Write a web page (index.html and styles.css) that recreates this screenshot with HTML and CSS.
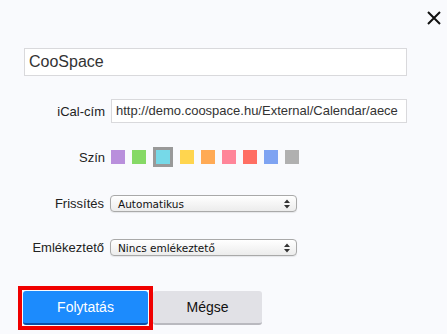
FILE: index.html
```html
<!DOCTYPE html>
<html lang="hu">
<head>
  <meta charset="UTF-8">
  <title>Naptár hozzáadása</title>
  <link rel="stylesheet" href="styles.css">
</head>
<body>

<div class="dialog">
  <div class="topbar">
    <button class="close-button" aria-label="Bezárás">
      <svg width="14" height="14" viewBox="0 0 14 14">
        <path d="M1 1 L13 13 M13 1 L1 13" stroke="#111" stroke-width="2" fill="none"/>
      </svg>
    </button>
  </div>

  <div class="title-field">CooSpace</div>

  <div class="form-row row-ical">
    <label class="form-label">iCal-cím</label>
    <div class="url-field">http://demo.coospace.hu/External/Calendar/aece</div>
  </div>

  <div class="form-row row-color">
    <label class="form-label">Szín</label>
    <div class="swatches">
      <span class="swatch" style="background:#b98fdc"></span>
      <span class="swatch" style="background:#86d966"></span>
      <span class="swatch selected" style="background:#76d9e8"></span>
      <span class="swatch" style="background:#ffd54f"></span>
      <span class="swatch" style="background:#ffaa55"></span>
      <span class="swatch" style="background:#ff8599"></span>
      <span class="swatch" style="background:#ff6e63"></span>
      <span class="swatch" style="background:#7ea3f2"></span>
      <span class="swatch" style="background:#b0b0b0"></span>
    </div>
  </div>

  <div class="form-row row-refresh">
    <label class="form-label">Frissítés</label>
    <div class="select-box">
      <span class="select-text">Automatikus</span>
      <svg class="select-arrows" width="6" height="10" viewBox="0 0 6 10">
        <path d="M0 4 L3 0.5 L6 4 Z M0 6 L3 9.5 L6 6 Z" fill="#333"/>
      </svg>
    </div>
  </div>

  <div class="form-row row-reminder">
    <label class="form-label">Emlékeztető</label>
    <div class="select-box">
      <span class="select-text">Nincs emlékeztető</span>
      <svg class="select-arrows" width="6" height="10" viewBox="0 0 6 10">
        <path d="M0 4 L3 0.5 L6 4 Z M0 6 L3 9.5 L6 6 Z" fill="#333"/>
      </svg>
    </div>
  </div>

  <div class="button-row">
    <div class="highlight">
      <button class="btn btn-primary">Folytatás</button>
    </div>
    <button class="btn btn-cancel">Mégse</button>
  </div>
</div>

</body>
</html>
```

FILE: styles.css
```css
body {
    margin: 0;
    padding: 0;
    background: #f9fafd;
    color: #222;
    font-family: 'Liberation Sans', Arial, sans-serif;
    font-size: 13px;
}

.dialog {
    width: 447px;
    height: 334px;
    overflow: hidden;
}

.topbar {
    display: flex;
    justify-content: flex-end;
    padding: 11px 6px 0 0;
}

.close-button {
    width: 14px;
    height: 14px;
    padding: 0;
    border: none;
    background: none;
    cursor: pointer;
    display: block;
}

.close-button svg {
    display: block;
}

.title-field {
    margin: 23px 0 0 24px;
    width: 383px;
    height: 28px;
    box-sizing: border-box;
    border: 1px solid #d9d9dc;
    background: #fff;
    padding: 0 0 0 4px;
    font-size: 16px;
    line-height: 26px;
    color: #333;
}

.form-row {
    display: flex;
    align-items: center;
    margin-left: 24px;
}

.form-label {
    width: 81px;
    margin-right: 6px;
    text-align: right;
    font-size: 13px;
    color: #222;
    white-space: nowrap;
}

.row-ical {
    margin-top: 23px;
    height: 24px;
}

.url-field {
    width: 296px;
    height: 24px;
    box-sizing: border-box;
    border: 1px solid #d9d9dc;
    background: #fff;
    padding: 0 0 0 4px;
    line-height: 22px;
    font-size: 13px;
    color: #333;
    white-space: nowrap;
    overflow: hidden;
}

.row-color {
    margin-top: 24px;
    height: 20px;
}

.swatches {
    display: flex;
    align-items: center;
    gap: 7px;
}

.swatch {
    width: 14px;
    height: 14px;
    display: block;
}

.swatch.selected {
    border: 3px solid #999;
}

.row-refresh {
    margin-top: 28px;
    height: 17px;
}

.row-reminder {
    margin-top: 27px;
    height: 17px;
}

.row-refresh .form-label,
.row-reminder .form-label {
    width: 80px;
}

.select-box {
    width: 187px;
    height: 17px;
    box-sizing: border-box;
    border: 1px solid #a9a9a9;
    border-radius: 4px;
    background: linear-gradient(#ffffff, #ececec);
    box-shadow: 0 1px 1px rgba(0, 0, 0, 0.08);
    display: flex;
    align-items: center;
    justify-content: space-between;
    padding: 0 6px 0 7px;
}

.select-text {
    font-family: 'DejaVu Sans', sans-serif;
    font-size: 10.5px;
    color: #111;
}

.select-arrows {
    display: block;
}

.button-row {
    display: flex;
    align-items: flex-start;
    margin: 30px 0 0 18px;
}

.highlight {
    border: 4px solid #f00000;
    padding: 1px;
}

.btn {
    height: 34px;
    border: none;
    border-radius: 3px;
    font-family: 'Liberation Sans', Arial, sans-serif;
    font-size: 14px;
    cursor: pointer;
}

.btn-primary {
    width: 125px;
    display: block;
    background: #1c8bfd;
    border-bottom: 2px solid #0b4fa8;
    color: #fff;
}

.btn-cancel {
    width: 109px;
    margin-top: 5px;
    background: #e1e1e6;
    border-bottom: 2px solid #b9b9bf;
    color: #111;
}
```
